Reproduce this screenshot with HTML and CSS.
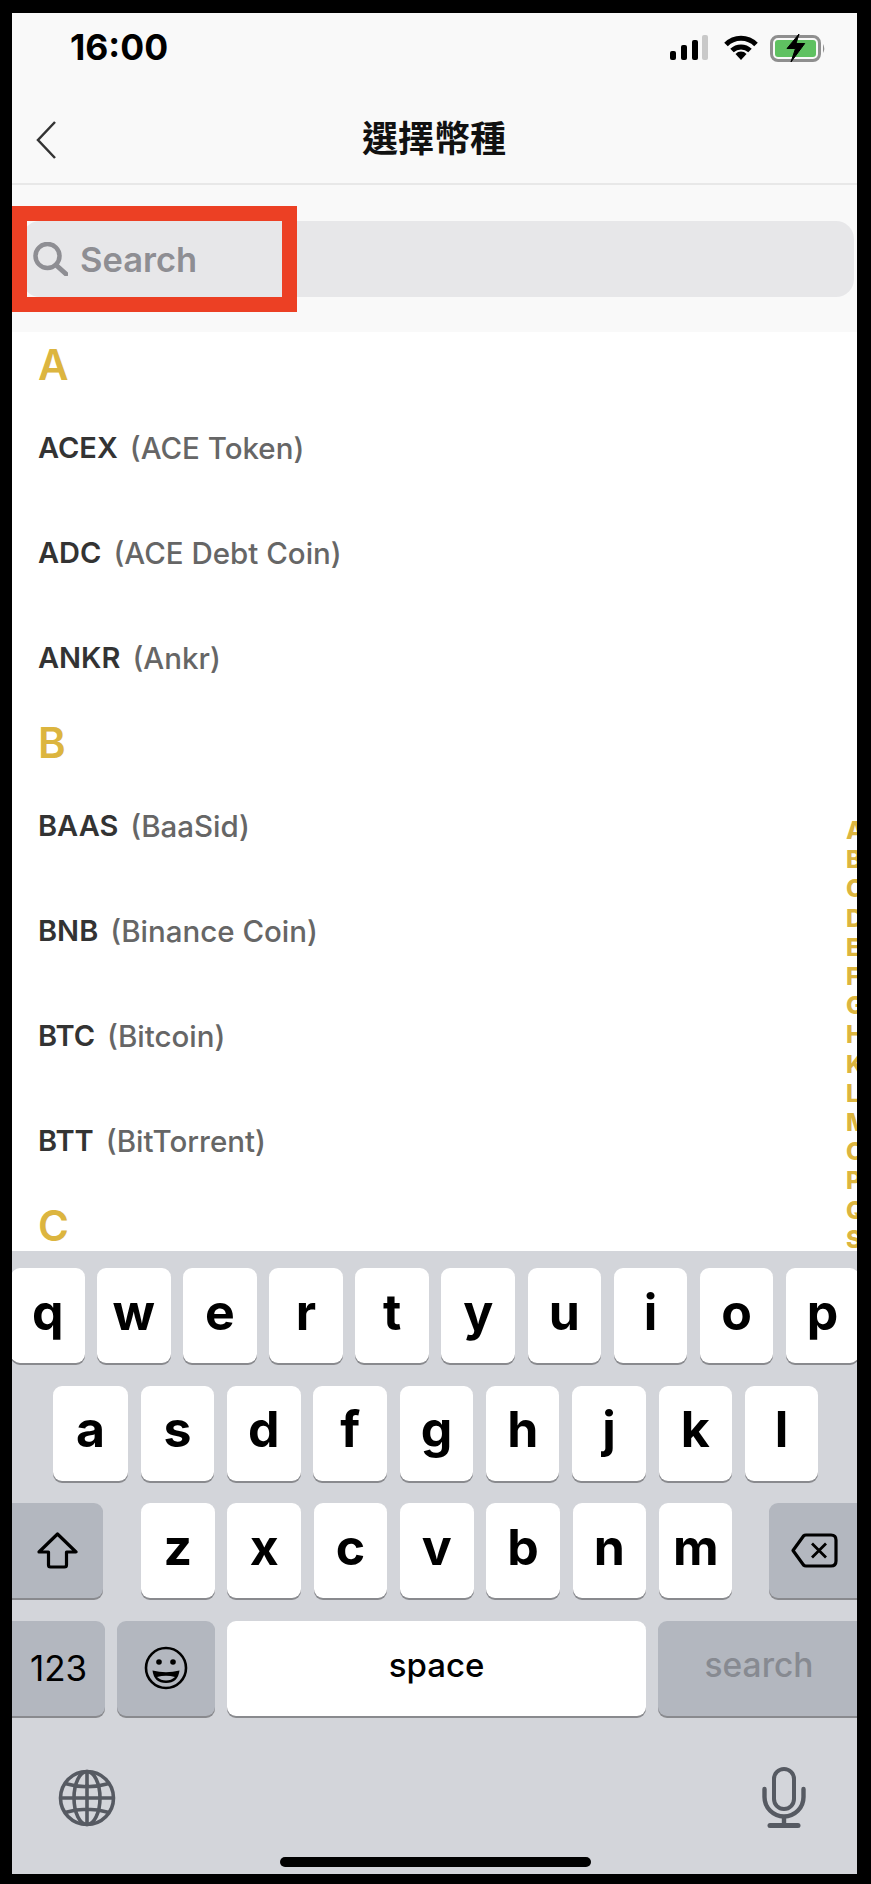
FILE: index.html
```html
<!DOCTYPE html>
<html lang="zh-Hant">
<head>
    <meta charset="UTF-8">
    <meta name="viewport" content="width=device-width, initial-scale=1.0">
    <title>選擇幣種</title>
    <link rel="stylesheet" href="styles.css">
</head>
<body>
    <div class="screen">
        <div class="status-bar">
            <span class="time">16:00</span>
            <div class="status-icons">
                <svg class="icon-signal" width="38" height="25" viewBox="0 0 38 25">
                    <rect x="0" y="16" width="6" height="9" rx="2" fill="#000"/>
                    <rect x="11" y="10" width="6" height="15" rx="2" fill="#000"/>
                    <rect x="22" y="5" width="6" height="20" rx="2" fill="#000"/>
                    <rect x="32" y="0" width="6" height="25" rx="2" fill="#c9c9c9"/>
                </svg>
                <svg class="icon-wifi" width="34" height="25" viewBox="0 0 34 25">
                    <path d="M2 9.5 A21 21 0 0 1 32 9.5" fill="none" stroke="#000" stroke-width="5"/>
                    <path d="M8 15.5 A13 13 0 0 1 26 15.5" fill="none" stroke="#000" stroke-width="5"/>
                    <path d="M11.5 19 A7.5 7.5 0 0 1 22.5 19 L17 25 Z" fill="#000"/>
                </svg>
                <svg class="icon-battery" width="56" height="32" viewBox="0 0 56 32">
                    <rect x="1.5" y="4.5" width="48" height="24" rx="6.5" fill="none" stroke="#8f8f8f" stroke-width="3"/>
                    <rect x="5" y="8" width="41" height="17" rx="3" fill="#5fc161"/>
                    <path d="M53 12 Q55.5 16.5 53 21 Z" fill="#8f8f8f"/>
                    <path d="M29 2 L17 16.5 H25.5 L21 30 L34.7 11.5 H26 Z" fill="#000" stroke="#000" stroke-width="1" stroke-linejoin="round"/>
                </svg>
            </div>
        </div>

        <div class="nav-bar">
            <svg class="icon-back" width="20" height="38" viewBox="0 0 20 38">
                <path d="M19 1 L2 19 L19 37" fill="none" stroke="#333" stroke-width="2.5"/>
            </svg>
            <h1>選擇幣種</h1>
        </div>

        <div class="search-wrap">
            <div class="search-field">
                <svg class="icon-search" width="35" height="34" viewBox="0 0 35 34">
                    <circle cx="14.5" cy="14" r="12" fill="none" stroke="#8e8e93" stroke-width="4.5"/>
                    <path d="M23 23 L33 32" fill="none" stroke="#8e8e93" stroke-width="5" stroke-linecap="round"/>
                </svg>
                <span class="placeholder">Search</span>
            </div>
        </div>
        <div class="highlight"></div>

        <div class="coin-list">
            <div class="group-title">A</div>
            <div class="coin"><b>ACEX</b><span>(ACE Token)</span></div>
            <div class="coin"><b>ADC</b><span>(ACE Debt Coin)</span></div>
            <div class="coin"><b>ANKR</b><span>(Ankr)</span></div>
            <div class="group-title">B</div>
            <div class="coin"><b>BAAS</b><span>(BaaSid)</span></div>
            <div class="coin"><b>BNB</b><span>(Binance Coin)</span></div>
            <div class="coin"><b>BTC</b><span>(Bitcoin)</span></div>
            <div class="coin"><b>BTT</b><span>(BitTorrent)</span></div>
            <div class="group-title">C</div>

            <div class="letter-index">
                <span>A</span><span>B</span><span>C</span><span>D</span><span>E</span>
                <span>F</span><span>G</span><span>H</span><span>K</span><span>L</span>
                <span>M</span><span>O</span><span>P</span><span>Q</span><span>S</span>
            </div>
        </div>

        <div class="keyboard">
            <div class="key-row row-top">
                <div class="key">q</div><div class="key">w</div><div class="key">e</div><div class="key">r</div><div class="key">t</div>
                <div class="key">y</div><div class="key">u</div><div class="key">i</div><div class="key">o</div><div class="key">p</div>
            </div>
            <div class="key-row row-middle">
                <div class="key key-a">a</div><div class="key">s</div><div class="key">d</div><div class="key">f</div><div class="key">g</div>
                <div class="key">h</div><div class="key">j</div><div class="key">k</div><div class="key">l</div>
            </div>
            <div class="key-row row-bottom">
                <div class="key key-dark key-shift">
                    <svg width="41" height="37" viewBox="0 0 41 37">
                        <path d="M20.5 2 L39 20 H29.5 V33 Q29.5 35 27.5 35 H13.5 Q11.5 35 11.5 33 V20 H2 Z" fill="none" stroke="#000" stroke-width="3.2" stroke-linejoin="round"/>
                    </svg>
                </div>
                <div class="key key-z">z</div><div class="key">x</div><div class="key">c</div><div class="key">v</div>
                <div class="key">b</div><div class="key">n</div><div class="key">m</div>
                <div class="key key-dark key-delete">
                    <svg width="47" height="35" viewBox="0 0 47 35">
                        <path d="M15 2 H40 Q45 2 45 7 V28 Q45 33 40 33 H15 Q13.5 33 12.5 32 L2 17.5 L12.5 3 Q13.5 2 15 2 Z" fill="none" stroke="#000" stroke-width="3.2" stroke-linejoin="round"/>
                        <path d="M21 10.5 L35 24.5 M35 10.5 L21 24.5" fill="none" stroke="#000" stroke-width="2.8"/>
                    </svg>
                </div>
            </div>
            <div class="key-row row-actions">
                <div class="key key-dark key-123">123</div>
                <div class="key key-dark key-emoji">
                    <svg width="44" height="44" viewBox="0 0 44 44">
                        <circle cx="22" cy="22" r="20" fill="none" stroke="#000" stroke-width="2.6"/>
                        <circle cx="15" cy="16" r="2.8" fill="#000"/>
                        <circle cx="29" cy="16" r="2.8" fill="#000"/>
                        <path d="M8.5 24.5 Q22 28 35.5 24.5 Q34 37 22 37 Q10 37 8.5 24.5 Z" fill="#000"/>
                        <path d="M13 31 Q22 28.5 31 31 Q27 34.5 22 34.5 Q17 34.5 13 31 Z" fill="#b3b7bf"/>
                    </svg>
                </div>
                <div class="key key-space">space</div>
                <div class="key key-dark key-search">search</div>
            </div>
            <div class="keyboard-tools">
                <svg class="icon-globe" width="58" height="58" viewBox="0 0 58 58">
                    <g fill="none" stroke="#565a62" stroke-width="3.6">
                        <circle cx="29" cy="29" r="26.5"/>
                        <ellipse cx="29" cy="29" rx="13" ry="26.5"/>
                        <path d="M29 2.5 V55.5 M2.5 29 H55.5 M7 14.5 Q29 21 51 14.5 M7 43.5 Q29 37 51 43.5"/>
                    </g>
                </svg>
                <svg class="icon-mic" width="44" height="62" viewBox="0 0 44 62">
                    <g fill="none" stroke="#565a62">
                        <rect x="12" y="2" width="20" height="40" rx="10" stroke-width="4"/>
                        <path d="M2.5 22 V30 A19.5 19.5 0 0 0 41.5 30 V22" stroke-width="4.4" stroke-linecap="round"/>
                        <path d="M22 50 V58" stroke-width="4.4"/>
                        <path d="M8 58.5 H36" stroke-width="5" stroke-linecap="round"/>
                    </g>
                </svg>
            </div>
            <div class="home-bar"></div>
        </div>
    </div>
</body>
</html>
```

FILE: styles.css
```css
:root {
    --bar-bg: #f9f9f9;
    --gold: #dcb53f;
    --key-bg: #d3d5da;
    --key-dark: #b3b7bf;
    --key-shadow: #898a8e;
}

* {
    margin: 0;
    padding: 0;
    box-sizing: border-box;
}

html, body {
    height: 100%;
}

body {
    background: #000;
    font-family: Inter, "Noto Sans CJK TC", sans-serif;
    overflow: hidden;
}

.screen {
    position: relative;
    width: 845px;
    height: 1861px;
    margin: 13px 0 0 12px;
    display: flex;
    flex-direction: column;
    overflow: hidden;
    background: #fff;
}

/* status bar */
.status-bar {
    height: 81px;
    flex-shrink: 0;
    background: var(--bar-bg);
    display: flex;
    justify-content: space-between;
    padding: 22px 31px 0 58px;
}

.time {
    font-size: 35.5px;
    font-weight: 700;
    line-height: 25px;
    color: #000;
}

.status-icons {
    display: flex;
    align-items: flex-start;
    gap: 14px;
}

.icon-wifi {
    margin: 0 -2px 0 2px;
}

.icon-battery {
    margin-top: -3px;
}

/* nav */
.nav-bar {
    position: relative;
    height: 91px;
    flex-shrink: 0;
    background: var(--bar-bg);
    border-bottom: 2px solid #e8e8e8;
    display: flex;
    align-items: center;
    justify-content: center;
}

.nav-bar h1 {
    font-family: "Noto Sans CJK TC", sans-serif;
    font-size: 36px;
    font-weight: 700;
    color: #111;
    margin: -5px 0 0 -1px;
}

.icon-back {
    position: absolute;
    left: 24px;
    top: 27px;
}

/* search */
.search-wrap {
    height: 147px;
    flex-shrink: 0;
    background: var(--bar-bg);
    padding: 36px 3px 35px 10px;
}

.search-field {
    height: 76px;
    background: #e7e7e9;
    border-radius: 18px;
    display: flex;
    align-items: center;
    padding-left: 11px;
}

.placeholder {
    margin-left: 12px;
    font-size: 34.5px;
    font-weight: 600;
    color: #8e8e93;
}

.highlight {
    position: absolute;
    left: 0;
    top: 193px;
    width: 285px;
    height: 106px;
    border: 15px solid #ec4024;
}

/* coin list */
.coin-list {
    position: relative;
    flex: 1;
    min-height: 0;
    overflow: hidden;
}

.group-title {
    height: 63px;
    padding-left: 26px;
    font-size: 42px;
    font-weight: 600;
    line-height: 65px;
    color: var(--gold);
}

.coin {
    height: 105px;
    padding-left: 26px;
    display: flex;
    align-items: center;
    gap: 12px;
    font-size: 29.5px;
    font-weight: 500;
}

.coin b {
    font-size: 29px;
    font-weight: 600;
    color: #333;
}

.coin span {
    color: #666;
}

.letter-index {
    position: absolute;
    left: 834px;
    top: 484px;
    display: flex;
    flex-direction: column;
    font-size: 24px;
    font-weight: 800;
    line-height: 29.2px;
    color: var(--gold);
}

/* keyboard */
.keyboard {
    position: relative;
    height: 623px;
    flex-shrink: 0;
    background: var(--key-bg);
    padding-top: 17px;
    display: flex;
    flex-direction: column;
    gap: 22.6px;
}

.key-row {
    display: flex;
    height: 95px;
    gap: 12.8px;
}

.key {
    width: 73.5px;
    flex-shrink: 0;
    background: #fff;
    border-radius: 9px;
    box-shadow: 0 2px 0 var(--key-shadow);
    display: flex;
    align-items: center;
    justify-content: center;
    font-size: 50px;
    font-weight: 700;
    color: #000;
    padding-bottom: 8px;
}

.key-dark {
    background: var(--key-dark);
}

.row-top {
    margin-left: -1px;
    gap: 12.6px;
}

.row-middle {
    margin-left: 41px;
}

.key-a {
    width: 75px;
}

.key-shift {
    width: 99px;
    margin-left: -8px;
    padding: 0 0 0 8px;
}

.key-z {
    margin-left: 25.4px;
}

.key-delete {
    width: 100px;
    margin-left: 23.4px;
    padding: 0 9px 0 0;
}

.row-actions {
    gap: 12px;
}

.key-123 {
    width: 101px;
    margin-left: -8px;
    padding: 0 0 0 8px;
    font-size: 35px;
    font-weight: 400;
}

.key-emoji {
    width: 98px;
    padding: 0;
}

.key-space {
    width: 419px;
    font-size: 33px;
    font-weight: 500;
    padding-bottom: 6px;
}

.key-search {
    width: 210px;
    padding: 0 8px 6px 0;
    font-size: 33.5px;
    font-weight: 500;
    color: #878a91;
}

.keyboard-tools {
    display: flex;
    justify-content: space-between;
    align-items: flex-start;
    padding: 29px 51px 0 46px;
}

.icon-globe {
    margin-top: 2px;
}

.home-bar {
    position: absolute;
    left: 268px;
    bottom: 7px;
    width: 311px;
    height: 10px;
    border-radius: 5px;
    background: #000;
}
```
